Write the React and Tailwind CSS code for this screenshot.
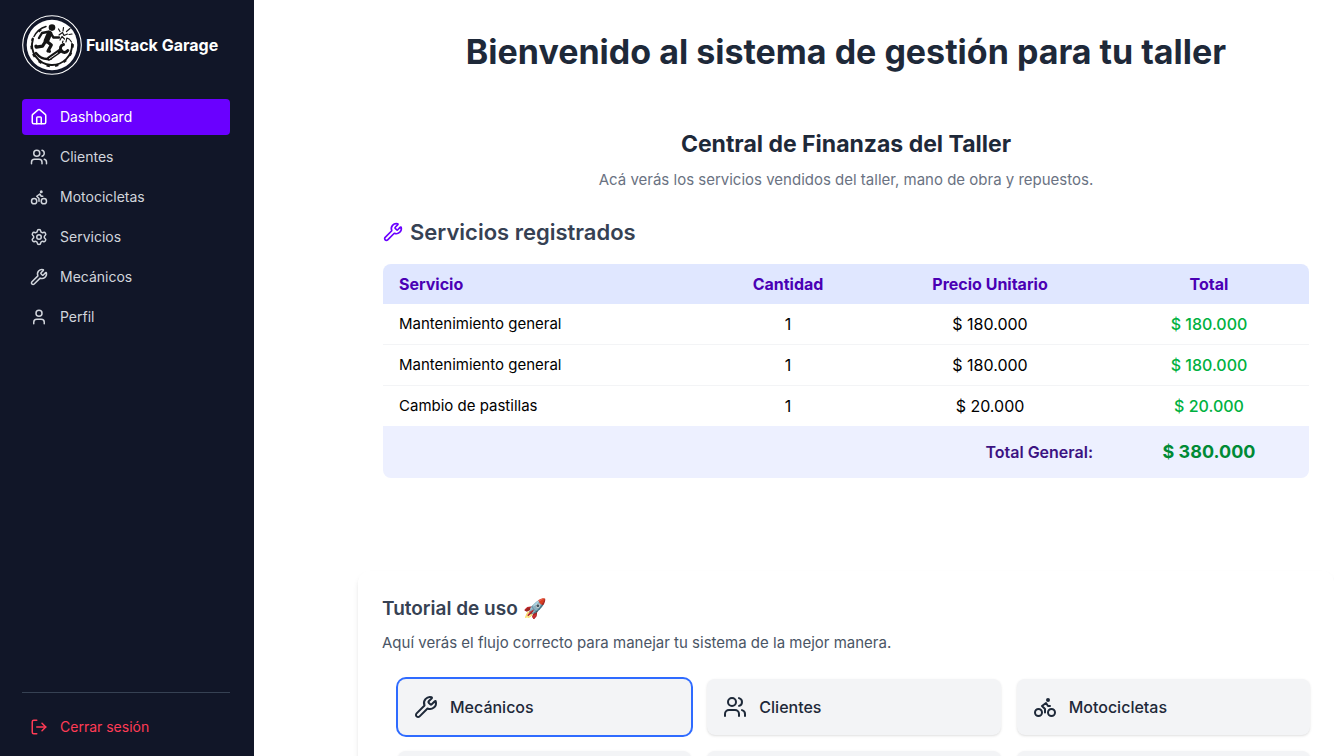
import React from "react";
import { House, Users, Bike, Settings, Wrench, User, LogOut } from "lucide-react";

const navItems = [
  { label: "Dashboard", icon: House, active: true },
  { label: "Clientes", icon: Users },
  { label: "Motocicletas", icon: Bike },
  { label: "Servicios", icon: Settings },
  { label: "Mecánicos", icon: Wrench },
  { label: "Perfil", icon: User },
];

const services = [
  { name: "Mantenimiento general", qty: 1, price: "$ 180.000", total: "$ 180.000" },
  { name: "Mantenimiento general", qty: 1, price: "$ 180.000", total: "$ 180.000" },
  { name: "Cambio de pastillas", qty: 1, price: "$ 20.000", total: "$ 20.000" },
];

const steps = [
  { label: "Mecánicos", icon: Wrench, active: true },
  { label: "Clientes", icon: Users },
  { label: "Motocicletas", icon: Bike },
  { label: "Servicios", icon: Settings },
  { label: "Perfil", icon: User },
  { label: "Dashboard", icon: House },
];

function Logo() {
  return (
    <svg viewBox="0 0 60 60" className="size-15 shrink-0" aria-hidden="true">
      <circle cx="30" cy="30" r="29.3" fill="#111628" stroke="#fff" strokeWidth="1.1" />
      <circle cx="30" cy="30" r="25.3" fill="#fff" />
      <g fill="none" stroke="#151515" strokeLinecap="round" strokeLinejoin="round">
        <path d="M24 11.500A20 20 0 0 0 12 21.500" strokeWidth="1.500" />
        <path d="M11 24A20 20 0 0 0 29 50A20 20 0 0 0 50 29" strokeWidth="1.900" />
        <path
          d="M17 14.500l1.500 1.800M9.500 24l1.500.5M8.500 32.500l1.800-.2M11 41l1.600-1M17.500 48l1-1.600M26 51.800l.4-1.800M35 51.500l-.5-1.800M43.500 47l-1.200-1.500M49.500 39.500l-1.700-.8M51.800 31l-1.800-.2"
          strokeWidth="3.400"
          strokeLinecap="butt"
        />
        <path d="M14 38c4 5 9 7 15 5.500" strokeWidth="2.400" />
        <path d="M27.500 18.500L24.500 25.500" strokeWidth="5.600" />
        <path d="M26.500 16.800L20 18l-3 5" strokeWidth="2.400" />
        <path d="M28.500 18l3 4.500 5.500 0" strokeWidth="2.400" />
        <path d="M25 26.500l4.300 3.500-3.300 6 1.500.3" strokeWidth="3.200" />
        <path d="M23.500 26.500l-3 4.700-6.200 1-.4-1" strokeWidth="3.200" />
        <path d="M27 43.500l11.500-8" strokeWidth="4.200" />
        <path d="M27.500 43.500l8-5.500" stroke="#fff" strokeWidth=".9" />
        <path d="M41.500 29.500a4 4 0 1 0 4.300 6" strokeWidth="3" />
        <path
          d="M38 16.500l-1.500-2.500M41 16l.5-3.500M44.500 16.500l3.500-3M47 19.500l3-.5M37 20l3.500-2.500 1.500 3 3.500-1.500M38 25l2-3.500 2.500 2.500M44 27l.8-4 2.700 1.200M48 25l1.500 2M40.500 27.500l.5-1.500"
          strokeWidth="1.200"
        />
      </g>
      <circle cx="30" cy="12.600" r="3.300" fill="#151515" />
    </svg>
  );
}

function Sidebar() {
  return (
    <aside className="flex w-[254px] shrink-0 flex-col bg-[#111628] pt-[15px] pr-6 pb-[11px] pl-[22px]">
      <div className="flex items-center gap-1">
        <Logo />
        <span className="text-base font-bold whitespace-nowrap text-white">FullStack Garage</span>
      </div>
      <nav className="mt-6 flex flex-col gap-1">
        {navItems.map(({ label, icon: Icon, active }) => (
          <a
            key={label}
            href="#"
            className={
              active
                ? "flex h-9 items-center gap-3 rounded bg-[#6a00ff] px-2 text-sm text-white"
                : "flex h-9 items-center gap-3 rounded px-2 text-sm text-gray-300"
            }
          >
            <Icon size={18} />
            {label}
          </a>
        ))}
      </nav>
      <div className="mt-auto border-t border-gray-700 pt-4">
        <button type="button" className="flex h-9 w-full items-center gap-3 rounded px-2 text-sm text-[#ff3b55]">
          <LogOut size={18} />
          Cerrar sesión
        </button>
      </div>
    </aside>
  );
}

function ServicesTable() {
  return (
    <table className="w-full overflow-hidden rounded-lg">
      <colgroup>
        <col className="w-[322px]" />
        <col className="w-[166px]" />
        <col className="w-[238px]" />
        <col className="w-[200px]" />
      </colgroup>
      <thead className="bg-indigo-100 text-[#4a00b4]">
        <tr>
          <th className="px-4 py-2 text-left font-bold">Servicio</th>
          <th className="px-4 py-2 text-center font-bold">Cantidad</th>
          <th className="px-4 py-2 text-center font-bold">Precio Unitario</th>
          <th className="px-4 py-2 text-center font-bold">Total</th>
        </tr>
      </thead>
      <tbody className="divide-y divide-gray-100 text-black">
        {services.map((s, i) => (
          <tr key={i}>
            <td className="px-4 py-2 text-[15px] leading-6">{s.name}</td>
            <td className="px-4 py-2 text-center">{s.qty}</td>
            <td className="px-4 py-2 text-center">{s.price}</td>
            <td className="px-4 py-2 text-center font-medium text-[#00b140]">{s.total}</td>
          </tr>
        ))}
      </tbody>
      <tfoot className="bg-[#edf0ff]">
        <tr>
          <td colSpan={3} className="px-4 py-3 text-right font-semibold text-[#3c1382]">
            Total General:
          </td>
          <td className="px-4 py-3 text-center text-lg font-bold text-[#008a35]">$ 380.000</td>
        </tr>
      </tfoot>
    </table>
  );
}

export default function App() {
  return (
    <div className="flex h-screen bg-white font-['Inter','Liberation_Sans',sans-serif]">
      <Sidebar />
      <main className="min-w-0 flex-1 overflow-y-auto pl-[104px] [scrollbar-width:none]">
        <h1 className="pt-8 text-center text-[34px] leading-10 font-bold text-gray-800">
          Bienvenido al sistema de gestión para tu taller
        </h1>

        <section className="px-[25px] pt-14">
          <h2 className="text-center text-[23px] leading-8 font-bold text-gray-800">
            Central de Finanzas del Taller
          </h2>
          <p className="mt-2 text-center text-[15px] leading-6 text-gray-500">
            Acá verás los servicios vendidos del taller, mano de obra y repuestos.
          </p>
          <h3 className="mt-6 mb-4 flex items-center gap-[7px] text-[22px] leading-8 font-semibold text-gray-700">
            <Wrench size={20} className="text-[#6a00ff]" />
            Servicios registrados
          </h3>
          <ServicesTable />
        </section>

        <section className="mt-[93px] rounded-xl p-6 shadow-md">
          <h3 className="text-[19px] leading-7 font-semibold text-gray-700">Tutorial de uso 🚀</h3>
          <p className="mt-2 text-[15px] leading-6 text-gray-600">
            Aquí verás el flujo correcto para manejar tu sistema de la mejor manera.
          </p>
          <div className="mt-6 grid grid-cols-3 gap-4 pl-4">
            {steps.map(({ label, icon: Icon, active }) => (
              <button
                key={label}
                type="button"
                className={
                  active
                    ? "flex h-14 items-center gap-3 rounded-lg bg-gray-100 px-4 font-medium text-gray-800 ring-2 ring-[#2f6bff]"
                    : "flex h-14 items-center gap-3 rounded-lg bg-gray-100 px-4 font-medium text-gray-800 shadow-sm"
                }
              >
                <Icon size={24} />
                {label}
              </button>
            ))}
          </div>
        </section>
      </main>
    </div>
  );
}
